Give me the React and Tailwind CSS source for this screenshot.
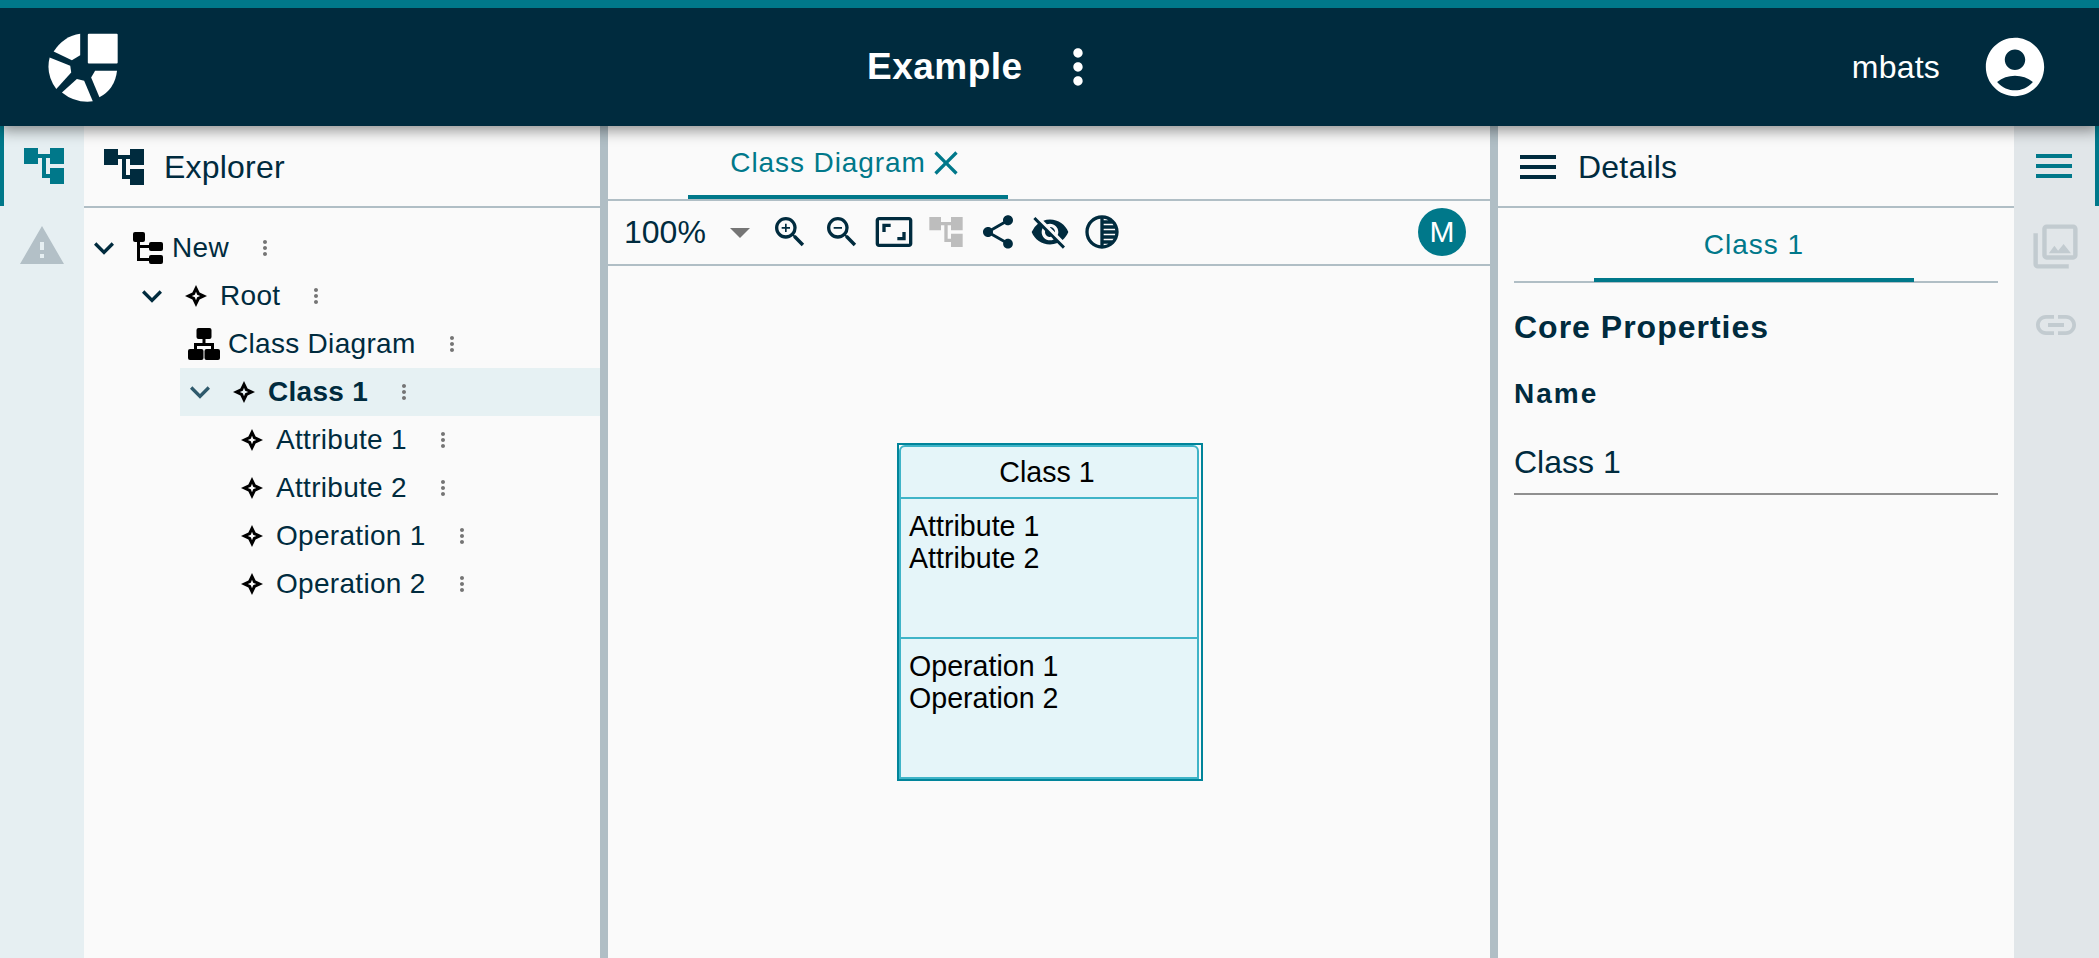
import {
  MdAccountCircle,
  MdAccountTree,
  MdArrowDropDown,
  MdAspectRatio,
  MdClose,
  MdExpandMore,
  MdLink,
  MdMenu,
  MdMoreVert,
  MdOutlinePhotoLibrary,
  MdShare,
  MdTonality,
  MdVisibilityOff,
  MdWarning,
  MdZoomIn,
  MdZoomOut,
} from "react-icons/md";

function Logo() {
  return (
    <svg viewBox="80 60 220 220" className="w-[73px] h-[73px]" fill="#ffffff">
      <rect x="203" y="68" width="90" height="90" rx="3" />
      <path d="M180 68Q130 75 100 122L155 148L180 133Z" />
      <path d="M88 140L150 165L153 185L108 235Q75 190 88 140Z" />
      <path d="M170 205L192 210L218 272Q165 278 125 245Z" />
      <path d="M225 180H291Q285 235 238 260L213 200Z" />
    </svg>
  );
}

function Star() {
  return (
    <svg viewBox="0 0 24 24" className="w-[24px] h-[24px]" fill="#000000" fillRule="evenodd">
      <path d="M12 1L15.6 8.4L23 12L15.6 15.6L12 23L8.4 15.6L1 12L8.4 8.4ZM12 7.8L10.8 10.8L7.8 12L10.8 13.2L12 16.2L13.2 13.2L16.2 12L13.2 10.8Z" />
    </svg>
  );
}

function FileTree() {
  return (
    <svg viewBox="0 0 30 32" className="w-[30px] h-[32px]" fill="#000000">
      <rect x="0" y="0" width="12" height="10" rx="2" />
      <rect x="4" y="8" width="3" height="21" />
      <rect x="4" y="13" width="14" height="3" />
      <rect x="4" y="26" width="14" height="3" />
      <rect x="16" y="10" width="14" height="9" rx="2" />
      <rect x="16" y="23" width="14" height="9" rx="2" />
    </svg>
  );
}

function Sitemap() {
  return (
    <svg viewBox="0 0 32 32" className="w-[32px] h-[32px]" fill="#000000">
      <rect x="8.5" y="0" width="15" height="11" rx="2" />
      <rect x="14.5" y="10" width="3" height="7" />
      <rect x="6" y="15" width="20" height="3" />
      <rect x="6" y="15" width="3" height="7" />
      <rect x="23" y="15" width="3" height="7" />
      <rect x="0" y="21" width="15.5" height="11" rx="2" />
      <rect x="16.5" y="21" width="15.5" height="11" rx="2" />
    </svg>
  );
}

function TreeRow({ indent, open, icon, label, bold, selected }) {
  return (
    <div className={`h-[48px] flex items-center ${indent} ${selected ? "bg-[#e6f1f3]" : ""}`}>
      {open && (
        <div className="w-[40px] flex justify-center">
          <MdExpandMore size={40} color={selected ? "#2f5a6c" : "#002b3e"} />
        </div>
      )}
      <div className="w-[48px] flex justify-center">{icon}</div>
      <span className={`text-[28px] tracking-[0.3px] whitespace-nowrap ${bold ? "font-bold" : ""}`}>{label}</span>
      <MdMoreVert size={24} color="#757575" className="ml-[24px]" />
    </div>
  );
}

const toolbarIcon = "w-[40px] h-[40px] flex items-center justify-center";

export default function App() {
  return (
    <div className="w-[2099px] h-[958px] overflow-hidden flex flex-col bg-[#fafafa] text-[#002b3e] font-['Liberation_Sans',sans-serif]">
      {/* top bar */}
      <header className="relative z-10 h-[126px] shrink-0 border-t-[8px] border-[#00788a] bg-[#002b3e] text-white flex items-center shadow-[0_4px_14px_rgba(0,0,0,0.45)]">
        <div className="w-[867px] pl-[47px] flex items-center">
          <Logo />
        </div>
        <span className="w-[155px] text-[37px] font-bold tracking-[0.5px] whitespace-nowrap">Example</span>
        <MdMoreVert size={56} className="ml-[28px]" />
        <span className="ml-auto text-[32px] tracking-[0.2px] whitespace-nowrap">mbats</span>
        <MdAccountCircle size={70} className="ml-[40px] mr-[49px]" />
      </header>

      <div className="flex-1 flex min-h-0">
        {/* left rail */}
        <aside className="w-[84px] shrink-0 bg-[#e6eff2] flex flex-col">
          <div className="h-[80px] border-l-[4px] border-[#00788a] flex items-center pl-[16px]">
            <MdAccountTree size={48} color="#00788a" />
          </div>
          <div className="h-[80px] flex items-center pl-[18px]">
            <MdWarning size={48} color="#b3c0c7" />
          </div>
        </aside>

        {/* explorer */}
        <section className="w-[516px] shrink-0 flex flex-col">
          <div className="h-[82px] border-b-2 border-[#b0bec5] flex items-center pl-[16px] pt-[2px]">
            <MdAccountTree size={48} color="#002b3e" />
            <span className="ml-[16px] text-[32px] tracking-[0.2px]">Explorer</span>
          </div>
          <div className="pt-[16px]">
            <TreeRow indent="ml-0" open icon={<FileTree />} label="New" />
            <TreeRow indent="ml-[48px]" open icon={<Star />} label="Root" />
            <TreeRow indent="ml-[96px]" icon={<Sitemap />} label="Class Diagram" />
            <TreeRow indent="ml-[96px]" open icon={<Star />} label="Class 1" bold selected />
            <TreeRow indent="ml-[144px]" icon={<Star />} label="Attribute 1" />
            <TreeRow indent="ml-[144px]" icon={<Star />} label="Attribute 2" />
            <TreeRow indent="ml-[144px]" icon={<Star />} label="Operation 1" />
            <TreeRow indent="ml-[144px]" icon={<Star />} label="Operation 2" />
          </div>
        </section>

        {/* divider */}
        <div className="w-[8px] shrink-0 bg-[#b0bec5]" />

        {/* diagram */}
        <main className="w-[882px] shrink-0 flex flex-col">
          <div className="h-[75px] border-b-2 border-[#b0bec5] pl-[80px] shrink-0">
            <div className="w-[320px] h-[73px] border-b-[4px] border-[#00788a] flex items-center justify-center text-[#00788a] pt-[4px]">
              <span className="text-[28px] tracking-[0.9px] whitespace-nowrap">Class Diagram</span>
              <MdClose size={40} />
            </div>
          </div>
          <div className="h-[65px] border-b-2 border-[#b0bec5] flex items-center pl-[16px] pr-[24px] pb-[2px] shrink-0">
            <span className="w-[82px] text-[32px]">100%</span>
            <MdArrowDropDown size={48} color="#757575" className="ml-[10px]" />
            <div className="ml-[6px] flex items-center gap-[12px]">
              <span className={toolbarIcon}><MdZoomIn size={40} /></span>
              <span className={toolbarIcon}><MdZoomOut size={40} /></span>
              <span className={toolbarIcon}><MdAspectRatio size={40} /></span>
              <span className={toolbarIcon}><MdAccountTree size={40} color="#bdbdbd" /></span>
              <span className={toolbarIcon}><MdShare size={40} /></span>
              <span className={toolbarIcon}><MdVisibilityOff size={40} /></span>
              <span className={toolbarIcon}><MdTonality size={40} /></span>
            </div>
            <div className="ml-auto w-[48px] h-[48px] rounded-full bg-[#00788a] text-white text-[30px] flex items-center justify-center">M</div>
          </div>
          <div className="relative flex-1 text-[#000000]">
            {/* class node */}
            <div className="absolute left-[289px] top-[177px] w-[306px] h-[338px] border-2 border-[#00849a] pr-[2px] bg-[#fafafa]">
              <div className="h-full border-2 border-[#3fb4c8] rounded-t-[6px] bg-[#e5f5f9] flex flex-col text-[28.6px] leading-[32px]">
                <div className="h-[52px] shrink-0 border-b-2 border-[#3fb4c8] flex items-center justify-center pr-[4px]">Class 1</div>
                <div className="h-[140px] shrink-0 border-b-2 border-[#3fb4c8] px-[8px] pt-[11px]">
                  <div>Attribute 1</div>
                  <div>Attribute 2</div>
                </div>
                <div className="flex-1 px-[8px] pt-[11px]">
                  <div>Operation 1</div>
                  <div>Operation 2</div>
                </div>
              </div>
            </div>
          </div>
        </main>

        {/* divider */}
        <div className="w-[8px] shrink-0 bg-[#b0bec5]" />

        {/* details */}
        <section className="w-[516px] shrink-0 flex flex-col">
          <div className="h-[82px] border-b-2 border-[#b0bec5] flex items-center pl-[16px] pt-[2px]">
            <MdMenu size={48} color="#002b3e" />
            <span className="ml-[16px] text-[32px] tracking-[0.2px]">Details</span>
          </div>
          <div className="px-[16px]">
            <div className="h-[75px] border-b-2 border-[#b0bec5] pl-[80px]">
              <div className="w-[320px] h-[74px] border-b-[4px] border-[#00788a] flex items-center justify-center text-[#00788a] text-[28px] tracking-[1px] pt-[4px]">Class 1</div>
            </div>
            <h2 className="mt-[24px] text-[32px] leading-[40px] font-bold tracking-[1px]">Core Properties</h2>
            <div className="mt-[29px] text-[28px] leading-[36px] font-bold tracking-[2px]">Name</div>
            <div className="mt-[15px] h-[68px] border-b-2 border-[#8f8f8f] flex items-center text-[32px] pt-[3px]">Class 1</div>
          </div>
        </section>

        {/* right rail */}
        <aside className="flex-1 bg-[#e1e6e9] flex flex-col items-stretch">
          <div className="h-[80px] border-r-[4px] border-[#00788a] flex items-center pl-[16px]">
            <MdMenu size={48} color="#00788a" />
          </div>
          <div className="h-[80px] flex items-center pl-[15px]">
            <MdOutlinePhotoLibrary size={53} color="#c2cbd0" />
          </div>
          <div className="h-[78px] flex items-center pl-[18px]">
            <MdLink size={48} color="#c2cbd0" />
          </div>
        </aside>
      </div>
    </div>
  );
}
